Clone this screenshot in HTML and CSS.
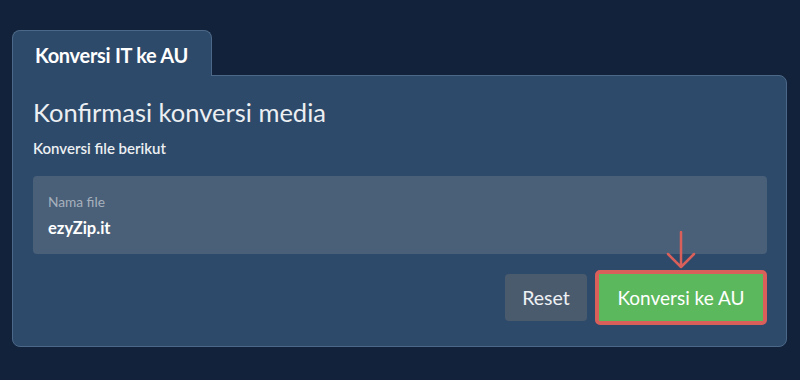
FILE: index.html
```html
<!DOCTYPE html>
<html>
    <head>
    <title>Konversi IT ke AU</title>
    <meta charset="UTF-8">
    <meta name="viewport" content="width=device-width, initial-scale=1.0">
    <link rel="stylesheet" href="styles.css">
    </head>

    <body>
        <div class="contenedor">
            <div class="tab">Konversi IT ke AU</div>
            <div class="panel">
                <h1 class="titulo">Konfirmasi konversi media</h1>
                <p class="subtitulo">Konversi file berikut</p>

                <div class="caja">
                    <div class="etiqueta">Nama file</div>
                    <div class="valor">ezyZip.it</div>
                </div>

                <div class="botones">
                    <button class="boton-reset">Reset</button>
                    <span class="resaltado">
                        <svg class="flecha" width="30" height="38" viewBox="0 0 30 38">
                            <path d="M15 1 L15 36 M2 23 L15 36 L28 23" fill="none" stroke="#d9605a" stroke-width="2.5" stroke-linecap="round" stroke-linejoin="round"/>
                        </svg>
                        <button class="boton-convertir">Konversi ke AU</button>
                    </span>
                </div>
            </div>
        </div>
    </body>
</html>
```

FILE: styles.css
```css
body{
    margin: 0;
    background-color: #11223a;
    font-family: Lato, "Noto Sans", sans-serif;
}

.contenedor{
    padding: 30px 13px 0 12px;
}

.tab{
    position: relative;
    z-index: 1;
    width: 200px;
    height: 46px;
    padding: 2px 0 0 22px;
    margin-bottom: -1px;
    box-sizing: border-box;
    display: flex;
    align-items: center;
    background-color: #2d4a6a;
    border: 1px solid #4c6888;
    border-bottom: none;
    border-radius: 8px 8px 0 0;
    color: #ffffff;
    font-size: 20px;
    font-weight: 700;
    letter-spacing: -0.3px;
}

.panel{
    background-color: #2d4a6a;
    border: 1px solid #4c6888;
    border-radius: 0 8px 8px 8px;
    padding: 21px 19px 21px 20px;
}

.titulo{
    margin: 0;
    font-size: 25.5px;
    font-weight: 400;
    color: #eceff2;
    line-height: 30px;
}

.subtitulo{
    margin: 12px 0 0 0;
    font-size: 15px;
    font-weight: 600;
    color: #eceff2;
    line-height: 18px;
}

.caja{
    margin-top: 19px;
    height: 78px;
    box-sizing: border-box;
    background-color: #4a6079;
    border-radius: 4px;
    padding: 18px 15px 0 15px;
}

.etiqueta{
    font-size: 13.7px;
    color: #a7b1bd;
    line-height: 16px;
}

.valor{
    margin-top: 8px;
    font-size: 16.5px;
    font-weight: 700;
    color: #ffffff;
    line-height: 20px;
}

.botones{
    display: flex;
    justify-content: flex-end;
    align-items: center;
    gap: 8px;
    margin-top: 16px;
}

.boton-reset{
    width: 82px;
    height: 47px;
    border: none;
    border-radius: 4px;
    background-color: #4b5b6e;
    color: #eef1f4;
    font-family: Lato, "Noto Sans", sans-serif;
    font-size: 19.5px;
}

.resaltado{
    position: relative;
    display: flex;
    border: 4px solid #d9605a;
    border-radius: 5px;
}

.flecha{
    position: absolute;
    left: 67px;
    top: -43px;
}

.boton-convertir{
    width: 164px;
    height: 47px;
    border: none;
    background-color: #5cb85c;
    color: #ffffff;
    font-family: Lato, "Noto Sans", sans-serif;
    font-size: 19px;
}
```
